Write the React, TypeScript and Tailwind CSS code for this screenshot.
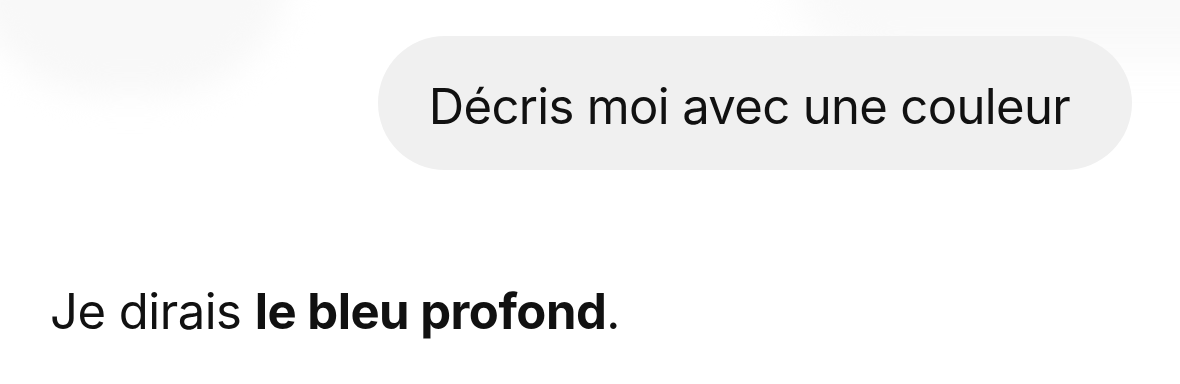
const App = () => {
  return (
    <div className="relative w-[1180px] h-[384px] overflow-hidden bg-white font-['Inter','Noto_Sans',sans-serif] text-[#111111]">
      {/* Faint background blobs */}
      <div className="absolute -left-[30px] -top-[170px] w-[320px] h-[265px] rounded-full bg-[#f8f8f8] blur-[16px]" />
      <div className="absolute left-[790px] -top-[120px] w-[520px] h-[180px] rounded-full bg-[#f9f9f9] blur-[20px]" />

      <div className="relative flex flex-col pt-[36px]">
        {/* User bubble */}
        <div className="flex justify-end pr-[48px]">
          <div className="rounded-full bg-[#f0f0f0] pl-[51px] pr-[62px] pt-[46px] pb-[39px]">
            <p className="text-[49px] leading-none tracking-[-0.65px]">Décris moi avec une couleur</p>
          </div>
        </div>

        {/* Assistant reply */}
        <p className="mt-[117px] pl-[50px] text-[49px] leading-none tracking-[-0.5px]">
          Je dirais <span className="font-bold">le bleu profond</span>.
        </p>
      </div>
    </div>
  );
};

export default App;
